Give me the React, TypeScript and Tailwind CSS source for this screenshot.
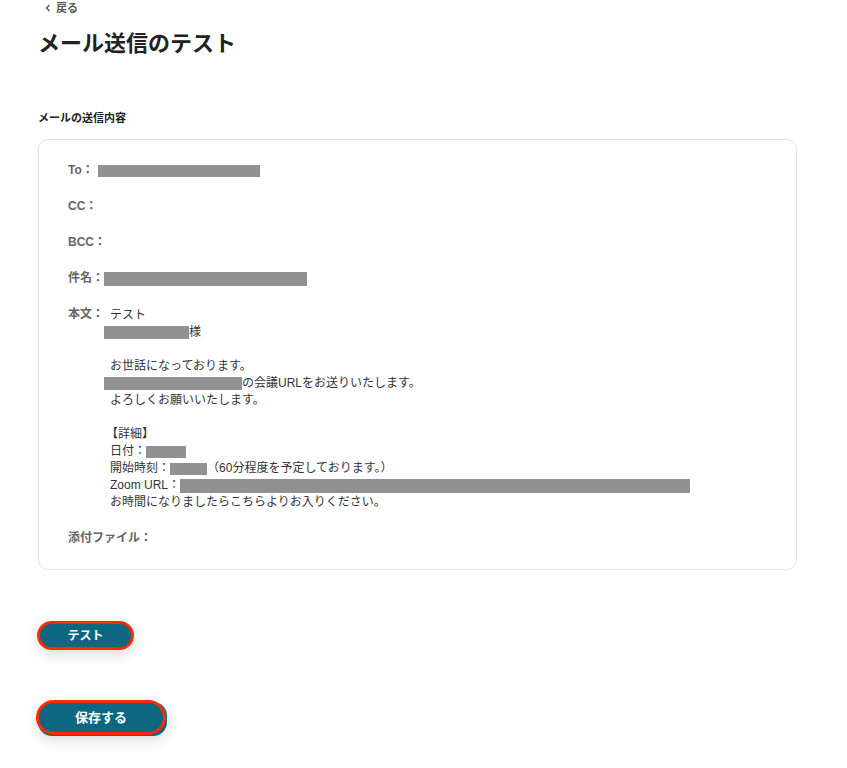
import React from 'react';

const Bar = ({ w, h = 13 }: { w: number; h?: number }) => (
  <span className="inline-block bg-[#919191] align-middle" style={{ width: w, height: h }} />
);

const Field = ({ label, children }: { label: string; children?: React.ReactNode }) => (
  <div className="flex items-start">
    <span className="shrink-0 text-[12px] font-bold text-[#666] leading-[17px]">{label}</span>
    <div className="text-[12px] text-[#333] leading-[17px]">{children}</div>
  </div>
);

export default function App() {
  return (
    <div
      className="min-h-screen bg-white pl-[38px] pr-[50px]"
      style={{ fontFamily: '"Liberation Sans", "Noto Sans CJK JP", sans-serif' }}
    >
      <button className="flex items-center gap-[4px] pl-[6px] pt-[1px] text-[11px] font-bold text-[#555] leading-[14px]">
        <svg width="8" height="8" viewBox="0 0 8 8" fill="none" stroke="#555" strokeWidth="1.4">
          <path d="M5.5 1 L2.5 4 L5.5 7" />
        </svg>
        戻る
      </button>
      <h1 className="mt-[14px] text-[22px] font-bold text-[#222] leading-[30px]">メール送信のテスト</h1>

      <h2 className="mt-[51px] text-[11px] font-bold text-[#222] leading-[16px]">メールの送信内容</h2>

      <div className="mt-[13px] w-[759px] rounded-[10px] border border-[#e3e3e3] pl-[29px] pt-[22px] pb-[22px]">
        <div className="flex flex-col gap-[19px]">
          <Field label="To：">
            <span className="ml-[4px]"><Bar w={162} h={12} /></span>
          </Field>
          <Field label="CC：" />
          <Field label="BCC：" />
          <Field label="件名：">
            <Bar w={203} h={14} />
          </Field>
          <Field label="本文：">
            <div className="pt-[1px]">
              <div className="pl-[6px]">テスト</div>
              <div><Bar w={85} />様</div>
              <div className="h-[17px]" />
              <div className="pl-[6px]">お世話になっております。</div>
              <div><Bar w={138} />の会議URLをお送りいたします。</div>
              <div className="pl-[6px]">よろしくお願いいたします。</div>
              <div className="h-[17px]" />
              <div className="pl-[2px]">【詳細】</div>
              <div className="pl-[6px]">日付：<Bar w={40} h={12} /></div>
              <div className="pl-[6px]">開始時刻：<Bar w={37} h={12} />（60分程度を予定しております。）</div>
              <div className="pl-[6px]">Zoom URL：<Bar w={510} h={14} /></div>
              <div className="pl-[6px]">お時間になりましたらこちらよりお入りください。</div>
            </div>
          </Field>
          <Field label="添付ファイル：" />
        </div>
      </div>

      <div className="mt-[51px] flex flex-col items-start gap-[50px] pb-[30px]">
        <button className="h-[29px] w-[97px] -ml-[1px] rounded-full border-[3px] border-[#ff2a00] bg-[#0d6780] text-[12px] font-bold text-white shadow-[0_4px_14px_rgba(0,0,0,0.15)]">
          テスト
        </button>
        <div className="relative -ml-[2px]">
          <div className="absolute left-[2px] top-[2px] h-[34px] w-[129px] rounded-[14px] bg-[#0d6780] shadow-[0_4px_14px_rgba(0,0,0,0.15)]" />
          <button className="relative h-[35px] w-[130px] rounded-full border-[3px] border-[#ff2a00] bg-[#0d6780] text-[13px] font-bold text-white">
            保存する
          </button>
        </div>
      </div>
    </div>
  );
}
